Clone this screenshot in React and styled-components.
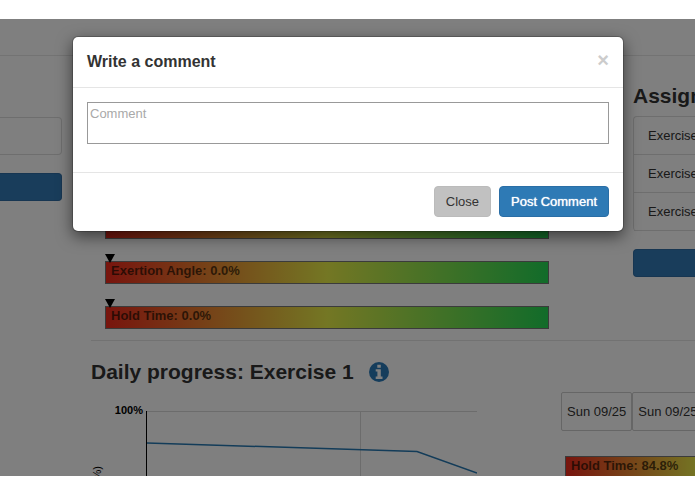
import React, { useState } from "react";
import styled, { createGlobalStyle, css } from "styled-components";

const exercises = ["Exercise 1", "Exercise 2", "Exercise 3"];
const sessions = ["Sun 09/25", "Sun 09/25"];

const InfoIcon = () => (
  <svg width="20" height="20" viewBox="0 0 20 20" aria-hidden="true">
    <circle cx="10" cy="10" r="10" fill="#2a7ab9" />
    <path
      d="M8.300 2.700h3.500v3H8.300zM6.700 7.200h5.100v7.300h1.700v2.400H6.700v-2.400h1.700V9.600H6.700z"
      fill="#fff"
    />
  </svg>
);

const Gauge = ({ label, marker }) => (
  <GaugeBar>
    {marker && <GaugeMarker />}
    {label}
  </GaugeBar>
);

const ProgressChart = () => (
  <Chart viewBox="0 0 386 76" preserveAspectRatio="xMinYMin meet">
    <path d="M56 11.5H386M269.5 11V76" stroke="#d8d8d8" fill="none" />
    <path d="M55.5 11V76" stroke="#000" fill="none" />
    <path
      d="M56 43L326 51.500L386 73"
      stroke="#2678b2"
      strokeWidth="1.500"
      fill="none"
    />
    <text x="52" y="14" textAnchor="end" fontSize="11" fontWeight="bold">
      100%
    </text>
    <text transform="translate(10 66) rotate(-90)" textAnchor="end" fontSize="11">
      (%)
    </text>
  </Chart>
);

const CommentModal = ({ onClose }) => {
  const [comment, setComment] = useState("");

  return (
    <ModalOverlay>
      <ModalBox role="dialog" aria-labelledby="comment-title">
        <ModalHeader>
          <ModalTitle id="comment-title">Write a comment</ModalTitle>
          <CloseButton aria-label="Dismiss" onClick={onClose}>
            ×
          </CloseButton>
        </ModalHeader>
        <ModalBody>
          <CommentInput
            aria-label="Comment"
            placeholder="Comment"
            value={comment}
            onChange={(e) => setComment(e.target.value)}
          />
        </ModalBody>
        <ModalFooter>
          <Button onClick={onClose}>Close</Button>
          <Button $primary onClick={onClose}>
            Post Comment
          </Button>
        </ModalFooter>
      </ModalBox>
    </ModalOverlay>
  );
};

const App = () => {
  const [open, setOpen] = useState(true);

  return (
    <Frame>
      <GlobalStyle />
      <Screen>
        <TopBar />
        <Columns>
          <SideColumn>
            <LeftCard />
            <BlockButton $side="left" aria-label="Select patient" />
          </SideColumn>
          <Main>
            <Summary>
              <Gauges>
                <Gauge />
                <Gauge label="Exertion Angle: 0.0%" marker />
                <Gauge label="Hold Time: 0.0%" marker />
              </Gauges>
              <Assigned>
                <Heading>Assigned</Heading>
                <ExerciseList>
                  {exercises.map((name) => (
                    <ExerciseItem key={name}>{name}</ExerciseItem>
                  ))}
                </ExerciseList>
                <BlockButton
                  $side="right"
                  aria-label="Add comment"
                  onClick={() => setOpen(true)}
                />
              </Assigned>
            </Summary>
            <Daily>
              <DailyTitle>
                <Heading>Daily progress: Exercise 1</Heading>
                <InfoIcon />
              </DailyTitle>
              <DailyRow>
                <ProgressChart />
                <Sessions>
                  <SessionTabs>
                    {sessions.map((day, index) => (
                      <SessionTab key={index}>{day}</SessionTab>
                    ))}
                  </SessionTabs>
                  <SessionGauge>
                    <Gauge label="Hold Time: 84.8%" />
                  </SessionGauge>
                </Sessions>
              </DailyRow>
            </Daily>
          </Main>
        </Columns>
        {open && <CommentModal onClose={() => setOpen(false)} />}
      </Screen>
    </Frame>
  );
};

export default App;

const GlobalStyle = createGlobalStyle`
  * {
    box-sizing: border-box;
  }
  body {
    margin: 0;
    background: #fff;
    color: #333;
    font-family: "Liberation Sans", Arial, sans-serif;
    font-size: 13px;
    line-height: 18px;
  }
  button, textarea {
    font: inherit;
  }
`;

const Frame = styled.div`
  display: flex;
  flex-direction: column;
  height: 100vh;
  padding: 19px 0 18px;
`;

const Screen = styled.div`
  position: relative;
  flex: 1;
  min-height: 0;
  overflow: hidden;
`;

const TopBar = styled.header`
  height: 37px;
  border-bottom: 1px solid #e7e7e7;
`;

const Columns = styled.div`
  display: flex;
  gap: 29px;
`;

const SideColumn = styled.aside`
  display: flex;
  flex-direction: column;
  gap: 18px;
  width: 62px;
  padding-top: 61px;
`;

const LeftCard = styled.div`
  height: 38px;
  border: 1px solid #ddd;
  border-left: 0;
  border-radius: 0 4px 4px 0;
`;

const BlockButton = styled.button`
  height: 28px;
  border: 1px solid #2e6da4;
  border-width: ${({ $side }) => ($side === "left" ? "1px 1px 1px 0" : "1px 0 1px 1px")};
  border-radius: ${({ $side }) => ($side === "left" ? "0 4px 4px 0" : "4px 0 0 4px")};
  background: #337ab7;
`;

const Main = styled.main`
  flex: 1;
  min-width: 0;
`;

const Summary = styled.section`
  display: grid;
  grid-template-columns: 1fr 62px;
  gap: 84px;
  padding: 0 0 11px 14px;
`;

const Gauges = styled.div`
  display: flex;
  flex-direction: column;
  gap: 22px;
  padding-top: 160px;
`;

const GaugeBar = styled.div`
  position: relative;
  height: 23px;
  padding: 0 5px;
  border: 1px solid #777;
  background: linear-gradient(to right, #f02a1c, #e8ee48 50%, #24d854);
  color: rgba(20, 10, 0, 0.7);
  font-weight: bold;
  white-space: nowrap;
`;

const GaugeMarker = styled.span`
  position: absolute;
  top: -8px;
  left: -1px;
  border: 5px solid transparent;
  border-top: 9px solid #000;
  border-bottom: 0;
`;

const Assigned = styled.div`
  display: flex;
  flex-direction: column;
  padding-top: 28px;
`;

const Heading = styled.h3`
  margin: 0;
  font-size: 21px;
  line-height: 24px;
  white-space: nowrap;
`;

const ExerciseList = styled.ul`
  margin: 8px 0 18px;
  padding: 0;
  list-style: none;
  border: 1px solid #ddd;
  border-width: 1px 0 0 1px;
  border-radius: 4px 0 0 4px;
`;

const ExerciseItem = styled.li`
  height: 38px;
  padding: 10px 14px;
  border-bottom: 1px solid #ddd;
  white-space: nowrap;
`;

const Daily = styled.section`
  border-top: 1px solid #e4e4e4;
  padding-top: 19px;
`;

const DailyTitle = styled.div`
  display: flex;
  align-items: center;
  gap: 15px;
`;

const DailyRow = styled.div`
  display: grid;
  grid-template-columns: 1fr 134px;
  gap: 84px;
  padding-top: 8px;
`;

const Chart = styled.svg`
  width: 100%;
  margin-top: 8px;
`;

const Sessions = styled.div`
  min-width: 0;
`;

const SessionTabs = styled.div`
  display: flex;
`;

const SessionTab = styled.button`
  flex: none;
  height: 39px;
  padding: 0 5px;
  border: 1px solid #ccc;
  border-radius: 2px;
  background: none;
  color: #333;
`;

const SessionGauge = styled.div`
  width: 270px;
  margin: 25px 0 0 4px;
`;

const ModalOverlay = styled.div`
  position: absolute;
  inset: 0;
  padding: 17px 71px 0 72px;
  background: rgba(0, 0, 0, 0.5);
`;

const ModalBox = styled.div`
  border: 1px solid rgba(0, 0, 0, 0.2);
  border-radius: 6px;
  background: #fff;
  background-clip: padding-box;
  box-shadow: 0 5px 15px rgba(0, 0, 0, 0.5);
`;

const ModalHeader = styled.div`
  display: flex;
  justify-content: space-between;
  align-items: center;
  height: 51px;
  padding: 0 14px;
  border-bottom: 1px solid #e5e5e5;
`;

const ModalTitle = styled.h4`
  margin: 0;
  font-size: 16px;
  line-height: 24px;
`;

const CloseButton = styled.button`
  padding: 0 0 4px;
  border: 0;
  background: none;
  color: #ccc;
  font-size: 20px;
  font-weight: bold;
  line-height: 20px;
  cursor: pointer;
`;

const ModalBody = styled.div`
  padding: 14px 14px 28px;
`;

const CommentInput = styled.textarea`
  display: block;
  width: 100%;
  height: 42px;
  padding: 2px;
  border: 1px solid #999;
  border-radius: 0;
  resize: none;

  &::placeholder {
    color: #a9a9a9;
  }
`;

const ModalFooter = styled.div`
  display: flex;
  justify-content: flex-end;
  gap: 8px;
  padding: 13px 14px 14px;
  border-top: 1px solid #e5e5e5;
`;

const Button = styled.button`
  height: 31px;
  padding: 0 11px;
  border: 1px solid #bbb;
  border-radius: 4px;
  background: #c1c1c1;
  color: #333;
  cursor: pointer;

  ${({ $primary }) =>
    $primary &&
    css`
      border-color: #2a6ea6;
      background: #2e7ab5;
      color: #fff;
      text-shadow: 0 0 1px #fff;
    `}
`;
